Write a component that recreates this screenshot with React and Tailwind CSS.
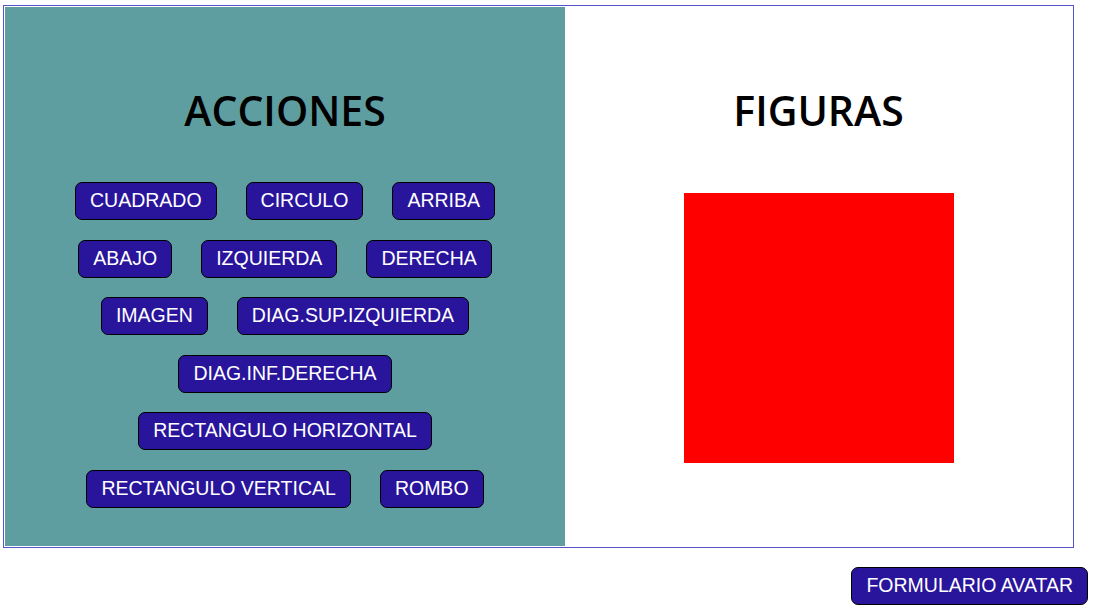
import React from "react";

const btn =
  "bg-[#29149c] text-white border border-black rounded-[7px] px-[14px] pt-[6px] pb-[8px] text-[19.5px] leading-[22px] whitespace-nowrap";

const rows = [
  ["CUADRADO", "CIRCULO", "ARRIBA"],
  ["ABAJO", "IZQUIERDA", "DERECHA"],
  ["IMAGEN", "DIAG.SUP.IZQUIERDA"],
  ["DIAG.INF.DERECHA"],
  ["RECTANGULO HORIZONTAL"],
  ["RECTANGULO VERTICAL", "ROMBO"],
];

export default function App() {
  return (
    <div
      className="w-[1093px] h-[611px] bg-white pt-[5px] pl-[3px]"
      style={{ fontFamily: '"Liberation Sans", Arial, sans-serif' }}
    >
      <div className="w-[1071px] h-[543px] bg-[#5555c8] p-px">
        <div className="w-full h-full bg-white p-px flex">
          <div className="w-[560px] h-full bg-[#5f9ea0] flex flex-col items-center">
            <h1
              className="mt-[78px] text-[41px] leading-[50px] font-semibold text-black"
              style={{ fontFamily: '"Open Sans", sans-serif' }}
            >
              ACCIONES
            </h1>
            <div className="mt-[47px] flex flex-col items-center gap-y-[19.5px]">
              {rows.map((r, i) => (
                <div key={i} className="flex justify-center gap-x-[29px]">
                  {r.map((t) => (
                    <button key={t} className={btn}>
                      {t}
                    </button>
                  ))}
                </div>
              ))}
            </div>
          </div>
          <div className="flex-1 h-full bg-white flex flex-col items-center">
            <h1
              className="mt-[78px] text-[41px] leading-[50px] font-semibold text-black"
              style={{ fontFamily: '"Open Sans", sans-serif' }}
            >
              FIGURAS
            </h1>
            <div className="mt-[58px] w-[270px] h-[270px] bg-[#ff0000]" />
          </div>
        </div>
      </div>
      <div className="flex justify-end pr-[5px] mt-[19px]">
        <button className={btn}>FORMULARIO AVATAR</button>
      </div>
    </div>
  );
}
